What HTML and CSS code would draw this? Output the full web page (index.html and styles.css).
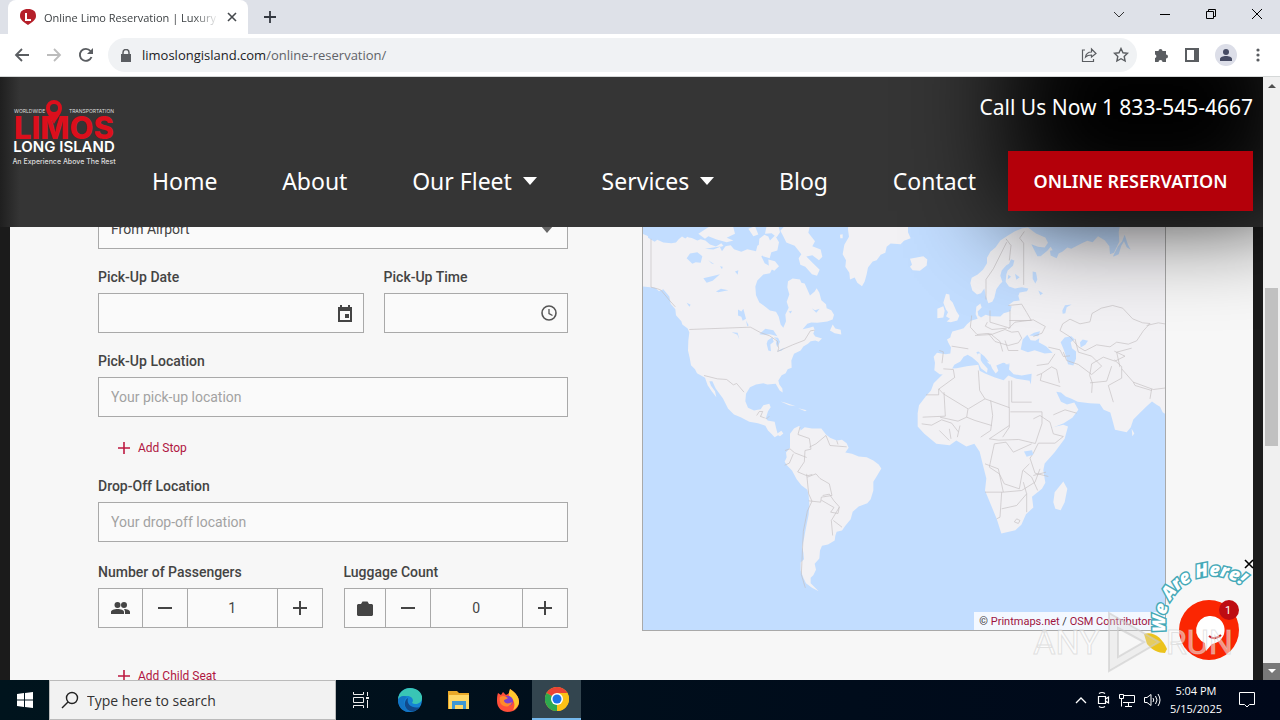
FILE: index.html
```html
<!DOCTYPE html>
<html lang="en">
<head>
<meta charset="UTF-8" />
<meta name="viewport" content="width=device-width, initial-scale=1" />
<title>Online Limo Reservation | Luxury</title>
<link rel="stylesheet" href="styles.css">
</head>
<body>
<!-- Tab strip -->
<div class="tabstrip">
<div class="tab">
<svg width="16" height="16" viewBox="0 0 16 16"><path d="M8 0C13 0 16 2 16 7c0 4-4 6-8 9C4 13 0 11 0 7 0 2 3 0 8 0z" fill="#b5202a"/><path d="M6 4v7h5" fill="none" stroke="#fff" stroke-width="2"/></svg>
<span class="tab-title">Online Limo Reservation | Luxury</span>
<button class="icon-btn" aria-label="Close tab"><svg width="10" height="10" viewBox="0 0 10 10"><path d="M1 1l8 8M9 1L1 9" stroke="#45494d" stroke-width="1.6"/></svg></button>
</div>
<button class="icon-btn new-tab" aria-label="New tab"><svg width="12" height="12" viewBox="0 0 12 12"><path d="M6 0v12M0 6h12" stroke="#333840" stroke-width="1.8"/></svg></button>
<div class="window-buttons">
<button class="icon-btn" aria-label="Search tabs"><svg width="12" height="12" viewBox="0 0 12 12"><path d="M1 4l5 5 5-5" fill="none" stroke="#333"/></svg></button>
<button class="icon-btn" aria-label="Minimize"><svg width="12" height="12" viewBox="0 0 12 12"><path d="M1 6.5h10" stroke="#000"/></svg></button>
<button class="icon-btn" aria-label="Restore"><svg width="12" height="12" viewBox="0 0 12 12"><path d="M1.5 3.5h7v7h-7zM3.5 3V1.500h7v7H9" fill="none" stroke="#000"/></svg></button>
<button class="icon-btn" aria-label="Close"><svg width="12" height="12" viewBox="0 0 12 12"><path d="M1 1l10 10M11 1L1 11" stroke="#000"/></svg></button>
</div>
</div>

<!-- Toolbar -->
<div class="toolbar">
<button class="icon-btn" aria-label="Back"><svg width="16" height="16" viewBox="0 0 16 16"><path d="M15 8H2M8 2L2 8l6 6" fill="none" stroke="#5a5d61" stroke-width="1.8"/></svg></button>
<button class="icon-btn" aria-label="Forward"><svg width="16" height="16" viewBox="0 0 16 16"><path d="M1 8h13M8 2l6 6-6 6" fill="none" stroke="#bcbcbc" stroke-width="1.8"/></svg></button>
<button class="icon-btn" aria-label="Reload"><svg width="16" height="16" viewBox="0 0 16 16"><path d="M13.500 10A6 6 0 1 1 12.500 4" fill="none" stroke="#5a5d61" stroke-width="1.9"/><path d="M15 1v6H9z" fill="#5a5d61"/></svg></button>
<div class="omnibox">
<svg width="10" height="13" viewBox="0 0 10 13"><path d="M0 5h10v8H0z" fill="#5a5d61"/><path d="M2 5V3.500a3 3 0 0 1 6 0V5" fill="none" stroke="#5a5d61" stroke-width="1.5"/></svg>
<span class="url">limoslongisland.com<span>/online-reservation/</span></span>
<button class="icon-btn" aria-label="Share"><svg width="16" height="16" viewBox="0 0 16 16"><path d="M4 3H1.500v11.500h11V12M4.500 10c.5-3 2-5 6-5V2L15 6.500 10.500 10V8C8 8 6 8.500 4.500 10z" fill="none" stroke="#5a5d61" stroke-width="1.2"/></svg></button>
<button class="icon-btn" aria-label="Bookmark"><svg width="16" height="16" viewBox="0 0 16 16"><path d="M8 1.500l2 4.300 4.500.5-3.300 3.100.9 4.600L8 11.700 3.900 14l.9-4.600L1.500 6.300 6 5.800z" fill="none" stroke="#5a5d61" stroke-width="1.4"/></svg></button>
</div>
<button class="icon-btn" aria-label="Extensions"><svg width="16" height="16" viewBox="0 0 16 16"><path d="M2 4h3.500a2 2 0 1 1 4 0H13v3.500a2 2 0 1 1 0 4V15H9.500a2 2 0 0 0-4 0H2v-4a1.800 1.800 0 0 0 0-3.500z" fill="#5a5d61"/></svg></button>
<button class="icon-btn" aria-label="Side panel"><svg width="14" height="14" viewBox="0 0 14 14"><path d="M1 1h12v12H1z" fill="none" stroke="#5a5d61" stroke-width="2"/><path d="M9 1h4v12H9z" fill="#5a5d61"/></svg></button>
<button class="icon-btn profile" aria-label="Profile"><svg width="12" height="12" viewBox="0 0 12 12"><circle cx="6" cy="3" r="3" fill="#464b63"/><path d="M0 12v-2c0-4 12-4 12 0v2z" fill="#464b63"/></svg></button>
<button class="icon-btn" aria-label="Menu"><svg width="10" height="14" viewBox="0 0 10 14" fill="#5a5d61"><circle cx="5" cy="2" r="1.600"/><circle cx="5" cy="7" r="1.600"/><circle cx="5" cy="12" r="1.600"/></svg></button>
</div>

<div class="viewport">
<div class="page">
<header class="site-header">
<a class="logo" href="#" aria-label="Limos Long Island">
<svg width="104" height="68" viewBox="0 0 104 68">
<text x="2" y="14" class="logo-small">WORLDWIDE</text>
<text x="102" y="14" class="logo-small" text-anchor="end">TRANSPORTATION</text>
<text x="52" y="40" class="logo-big" text-anchor="middle">LIMOS</text>
<path d="M42 1a8 8 0 0 1 8 8c0 5-4 9-8 16-4-7-8-11-8-16a8 8 0 0 1 8-8z" fill="#dc0f1c"/><circle cx="42" cy="9" r="4" fill="#353535"/>
<text x="52" y="53" class="logo-mid" text-anchor="middle">LONG ISLAND</text>
<text x="52" y="65" class="logo-tag" text-anchor="middle">An Experience Above The Rest</text>
</svg>
</a>
<nav class="main-nav">
<a href="#">Home</a>
<a href="#">About</a>
<a href="#">Our Fleet <svg width="14" height="8" viewBox="0 0 14 8"><path d="M0 0h14L7 8z" fill="#fff"/></svg></a>
<a href="#">Services <svg width="14" height="8" viewBox="0 0 14 8"><path d="M0 0h14L7 8z" fill="#fff"/></svg></a>
<a href="#">Blog</a>
<a href="#">Contact</a>
</nav>
<div class="header-actions">
<a class="phone" href="#">Call Us Now 1 833-545-4667</a>
<a class="reserve" href="#">ONLINE RESERVATION</a>
</div>
</header>

<main class="panel">
<form class="booking">
<div class="with-icon">
<select class="field" aria-label="Service Type"><option>From Airport</option></select>
<svg class="caret" width="12" height="12" viewBox="0 0 12 12"><path d="M0 5h12l-6 7z" fill="#666"/></svg>
</div>
<div class="row row-when">
<div class="group">
<label for="date">Pick-Up Date</label>
<div class="with-icon">
<input class="field" type="text" id="date" />
<svg width="16" height="18" viewBox="0 0 16 18"><path d="M2 3h12v13H2z" fill="none" stroke="#444" stroke-width="2"/><path d="M2 3h12v3H2zM3 0h2v3H3zM11 0h2v3h-2zM8 9h4v4H8z" fill="#444"/></svg>
</div>
</div>
<div class="group">
<label for="time">Pick-Up Time</label>
<div class="with-icon">
<input class="field" type="text" id="time" />
<svg width="16" height="16" viewBox="0 0 16 16"><circle cx="8" cy="8" r="7" fill="none" stroke="#555" stroke-width="1.6"/><path d="M8 4v4.500l3.500 2" fill="none" stroke="#555" stroke-width="1.3"/></svg>
</div>
</div>
</div>
<div class="group">
<label for="pickup">Pick-Up Location</label>
<input class="field" type="text" id="pickup" placeholder="Your pick-up location" />
</div>
<button class="add" type="button"><svg width="12" height="12" viewBox="0 0 12 12"><path d="M6 0v12M0 6h12" stroke="#bd1a41" stroke-width="1.6"/></svg>Add Stop</button>
<div class="group">
<label for="dropoff">Drop-Off Location</label>
<input class="field" type="text" id="dropoff" placeholder="Your drop-off location" />
</div>
<div class="row row-counts">
<div class="group">
<label for="passengers">Number of Passengers</label>
<div class="counter">
<span class="cell"><svg width="20" height="14" viewBox="0 0 20 14" fill="#444"><circle cx="6.500" cy="4" r="3"/><circle cx="13" cy="4" r="3"/><path d="M0 13v-2c0-4 13-4 13 0v2zM14 13v-2c0-1-.3-2-1-3 3 0 6 1 6 3v2z"/></svg></span>
<button class="cell" type="button" aria-label="Fewer passengers"><svg width="14" height="14" viewBox="0 0 14 14"><path d="M0 7h14" stroke="#444" stroke-width="2"/></svg></button>
<input type="text" id="passengers" value="1" />
<button class="cell" type="button" aria-label="More passengers"><svg width="14" height="14" viewBox="0 0 14 14"><path d="M0 7h14M7 0v14" stroke="#444" stroke-width="2"/></svg></button>
</div>
</div>
<div class="group">
<label for="luggage">Luggage Count</label>
<div class="counter">
<span class="cell cell-bag"><svg width="16" height="15" viewBox="0 0 16 15"><path d="M1 3h3l1.500-2.500h5L12 3h3l1 1v10l-1 1H1l-1-1V4z" fill="#444"/></svg></span>
<button class="cell" type="button" aria-label="Less luggage"><svg width="14" height="14" viewBox="0 0 14 14"><path d="M0 7h14" stroke="#444" stroke-width="2"/></svg></button>
<input type="text" id="luggage" value="0" />
<button class="cell" type="button" aria-label="More luggage"><svg width="14" height="14" viewBox="0 0 14 14"><path d="M0 7h14M7 0v14" stroke="#444" stroke-width="2"/></svg></button>
</div>
</div>
</div>
<button class="add add-seat" type="button"><svg width="12" height="12" viewBox="0 0 12 12"><path d="M6 0v12M0 6h12" stroke="#bd1a41" stroke-width="1.6"/></svg>Add Child Seat</button>
</form>

<div class="map">
<svg class="map-art" viewBox="643 209 522 421" preserveAspectRatio="xMidYMid slice">
<!-- North America and Greenland -->
<g transform="translate(640 225) scale(.33333)">
<path class="land" d="M8 -60V183l37 4 12 10 13-6 18 22 4 22 14 16 2 18 16 18 3 10 16 12 5 12-3 24-1 30 5 22 4 22 12 12 6 12 24 14 8 22 12 18 14 18-4-18-12-16-5-14h9l10 22 22 30 15 30 18 18 20 8 26 14 26 4 22 8 8 14 10 10 10 10 10-6-6-22-4-18-22-4-4-8 6-20 8-12-4-10-18 4-8 12-20 4-18-8-8-20 2-22 12-20 18-8 22-4 12 4 25-2 12 20 9 6-1-12-9-12-3-12 10-16 12-6 6-12 12-4-1-22 8-20 20-10 8-12 14-8 8-8 14-2 10 4 10-10-20-6-6-8 4-12-4-10-12 4-20 4 14-16 12-4 18 1 30-4 16-6 4-14-8-14-14-6-2-12-14-12-6-22-8-14-6 10-14 12-8-18-8-18-10-2-4-10-22-3-14 8-2 18 6 22-8 22 6 18-10 20 2 20-8 20-8-10-6-24-8-14-18-4-20-16-12-8-10-22-2-26 6-18 18-18 20-4 8-16-24-14-10-20 12-14-4-10-8-16-12 8-4 16-26-6-18 8-22-8-10-12-20 4-8-10-16 10-18-6-14-12-14-4-10 4-18-8-8-6-10 8-10-6-10 8-8 10-14 2-24-2-18-8-8 6-20-12V-60z"/>
<path class="water" d="M0 -60V22l20 8 14 8 46 6 20-6 8-12 12 4 14-4 12 10 20 2 10-14V-60z"/>
<path class="land" d="M175 25l30-20 50-8 25 8 5 20-25 12 20 8-20 5-30-8-25-10-10 8zM325 10l20-8 10 25-15 5zM358 40l15-12 12 5 5 12 15-15 12 20-5 25-18 5-5 18-20-6-14-16zM385 102l20 5 12 15-14 14-16-8zM380 0h35l5 20-10 15-15-12-20 2zM435 0h75l-5 22 20 25-8 15 25 10 5 22-10 10-20-15-18 4 20 20 20 20-8 18-15-5-20-22-15-6-5-20 8-12-8-10-12-15-25-10-10-20-8-15zM600 28l8-2v12h-7zM628-60l-4 72 3 22-14 24-5 28 10 18-2 20 12 18 2 20 14-6 8 16 14 10 8-14 6-22 4-20 14-18 12-4 12-16 14-6 4-18 12-10 30 2 10-10 20-8-8-18V-60zM570 315l8-18 8 12 16 4 2 14-20-4zM422 528l15 4 30 10-20-3zM475 548l25 6-5 3z"/>
<path class="water" d="M140 98l10-14 22-4 15 12-5 20-15-2-10 5zM190 158l35-8 15-4-22 20-18 6zM228 198l15-8 22 4-30 6zM285 138l10-4-2 14zM240 122l8 2-2 7zM140 232l12 6-4 6zM294 252l10 6 6-8 8 30-10 6-4-12-10-4zM318 285l8 14-4 4zM358 326l18-16 24 4 12 18-22-6-16 2zM383 345l14-10 4 14-10 8 2 20-8-2-5-20zM402 335l12 2 6 12-8 16-4-10 2-12zM410 378l24-12-10 10zM515 248l10 6 14-4-10 12zM275 320l18 2 5 20-6-14zM205 104l18 12-8-2zM446 258l10-2-4 8zM240 65l20-8-14 20zM195 70l50-8-25 10z"/>
<path class="border" d="M33 40v145l20 5 10 4 25 30 18 20M148 312l183-7 6 3 24 13 28 10 23 16 4 22-3 9 45-20 36-14 17-28 13-2M192 450l40 10 28 2 20 16 10-4 22 26M350 570l8-12h10l-6 14M360 572l20 8 8-8"/>
</g>
<!-- Europe, Asia and Africa -->
<g transform="translate(900 225) scale(.33333)">
<path class="land" d="M345 17l-20 12-24 16-14 20-16 14-10 18 0 16-12 20-16 14-18 10-4 16 6 22 14 12 12-4 10-14 4 22 8 22 12-4 6-12 6-26 10-14 8-8-6-18 4-16 14-16 8-4 6-14 10 4-4 16-16 14-4 12-2 22 10 14 18 6 20-4 20 4-4 8-22 4-4 10 4 14-18 2-16 12 10 4-4 14-20 6-10 10-28-1-16-4-14 8-8-6-2-12 12-12-4-12-12 10-2 22 6 14-20 6-12 10-10 12-12 4-22 6-4 10-2 8-10 6 4 10 8 14-2 18-14 2-26-4-10 12 4 18-2 22 16 12 16 2 18-12 10-18 18-10 10-14 12-6 14 8 18 16 8 16 18 14 2-12-16-18-12-20-6-12 6-2 18 14 16 20 8 18 10 14 8-8-6-16 20-8 20 2-2 18 14 14 24 4 30-5-2 25-10 25-4 20 16 25 14 26 16 30 10 15 26-6 30-12 26-16 18-24-12-22-22 6-18-8-14-30 14 2 14 12 16 6 20 10 36 4 30 2 12 18 20 8 6 22 8 30L680 620l12-14 8-24 20-20 20-20 16-14 14 10 10 6 8 16 12 8V-60H668l-8 60-4 20 2 28-16 34-12 4-2-24-14-18-20-12-16 18-16-4-18 8-30 16-12-4-14 12-12 6-6 14-18-8-2-14 8-2-6-10-10 12-20 16-10 0-10-20-8-16 20 8 20 2 10-14-8-16-28-12-24-18-16 2z"/>
<path class="land" d="M145 430l25-2 30-6 35-4 4 18 16 8 30 12 26 8 14-14 24 10 40 6 4 18 14 36 14 28 16 28 18 30 35-8 14 5-10 37-30 40-30 34-4 20 6 38-10 18-30 24 4 32-22 20-14 32-18 16-42 10L290 880l-35-85 4-36-10-40-10-40-16-24-24 8-30-18-20 14-40-4-36-30-20-22 0-40 4-24 20-26 16-18 8-22zM490 768l-26 32-4 30 6 20 16 4 12-24 8-40z"/>
<path class="land" d="M30 100l20-4 20-4 12 10-2 18-20 16-22-2-8-10 6-6zM0 25h18L0 50zM138 205l10 2 2 16 8 8 12 28 8 12-6 14-20 5-12-2 10-8-12-8 6-12-6-8-8-20zM112 250l18-8 4 14-4 20-18 2zM260 408l14 2-4 8zM232 385l10-2 0 20-8 2zM380 423l16-4-6 6zM315 410l18 6h-16zM695 610l8 14-6 8z"/>
<path class="water" d="M362 372l6-30 14-14 10 16 14 2 12-8-2 12 22 12 20 20-24 2-30-10-20 6zM388 330l14-8 18-5-5 15zM482 350l12-14 20-4 10 10-12 8 4 18 12 10 0 22-8 20-16-4-6-24-6-18zM487 255l8-16 20-2-15 8-4 18-8 2zM540 350l8-8 16 4-8 12-14 8zM398 138l10 2 4 22-6 12-8-14zM415 195l14 8-8 6zM640 90l14-28 12-14 8-20 10 30 8 15-12-8-8-18-8 14-8 25-16 8zM325 148l8 6-10 8zM345 145l14 10-10 8z"/>
<path class="border" d="M318 40l15 20-5 45M373 18l-14 20 12 15v125M320 50l-40 80-22 32v60M215 270l-4 35 20 22 30-3 15 2M270 255v35l60 18v-55M325 240l40-4 15 25 14 24-66 0M325 310l20-20 55-7 36 20-10 20-26 10M262 290l-6 12 20 10 44-4M225 330l50-3 40-15 20 8 20-2 10 20-10 14-30 8-40-12-20-24M315 345l10 30 30 0M275 328l25 20 8 30M155 362l50 8M118 375l12 4-4 34M445 365l35 8 10 20 20-2M465 385l-20 30-35 5M480 315l8-20 22-14 30 14 30-6 6-25 28-16 34-8 30 8 30 32 30 12 22 2-20 22-20 30-25 10-35-6-20 14-40-6-35 18-20-12-25-30zM525 340l10 40 40 12 30 30-30 25-40-30-35-12-10-25M575 415l35-20 35 12 30-15-32-15M575 415l-6 35 8 22-2 30M570 472l50-5 15-45M640 530l-15-50 40-22 0-35-22-20M665 430l35 40 60 22 40-5M700 470l5 10 50 15M755 490l-5 30M660 425l-10-45 45-12M740 300l35-8 25 4M410 450l15-6 30-20 15 8 8 40M425 445l-4 20 60 18M460 568l35-15 35 10"/>
<path class="border" d="M130 430l30 2 4 24-48 35v17l-38 0M116 490l14 15 74 45-4 25-26 12-54-12M132 500l4 72-68 3M235 435l4 60 16 25-50 30M255 520l72 26v-80M335 465v65h60M328 545v60l-20 30M272 525l6 45-6 45-30 20M275 600l-50-15-25-10M328 600l-60 40 28 4 60-2 50 12 20-60 0-35h-95M65 595l30 4 30-16 30 10 20 26M118 615l30 30M148 610l5 30M180 600l-8 35M400 580l20-10 30 20 10 35 30 8-25 20-50 0-15 30-10 15 15 45 40 10M395 655l-55 25-22-30-35 5-15 70 30 20 15 30 45 15 10-55 20-20M255 715l40 15 15 70h-55M305 800l-5 75-10 5M310 800l55-5 40-25 15-40M305 850l45-10 30-35-10-35M380 805l0 55M350 880l10 5-5 9-12-5zM370 735l25 20 18 40M400 750l38-10"/>
<path class="water" d="M372 678l24-4 4 14-20 6z"/>
</g>
<!-- South America -->
<g transform="translate(740 410) scale(.33333)">
<path class="land" d="M150 70l12-16 16-8 4 14 12-10 22 4 28 0 14 18 12 10 20 8 16-2 14 10 6 14-10 14 20 4 20 8 24 2 20 10 16 12 8 12-12 20-12 20 0 26-8 26-10 12-26 10-18 16-6 22-16 20-10 14-16 4-4 12-2 14-20 12-18 4-6 14-2 24-14 16 4 18-8 16-8 8 0 16 24 24-20-10-18-14-8-16-8-22 0-24 10-10-2-20-4-16 6-26 6-32 8-40 2-30-2-28-4-16-18-14-14-18-14-26-14-14-8-12 6-14-2-14 12-14zM0 3l12 8 26 4 22 12 16-4 14 16 4 12 8 14 10 4 12-8 6 8-10 8-12-6-22-12-10-20-16-6-10-8-50-12z"/>
<path class="border" d="M180 50l-6 22 34 12 5 32-18 4-2 34-20 30 28 12 16-4M135 120l15-5 14 12 36 14M160 130l-12 28-14 6M200 190l6 60 10 22-14 30-12 60-6 130 12 40M202 200l26-10 12 14 28 16 8 35-32 5-2 15-36-4M248 255l20-4 14 20 16 18-4 20-22-4 10-14-38-22M280 330l26 20M298 290l-24 40 4 45M208 110l20-10 30-25 12 30 50 4M290 90l4 12"/>
</g>
</svg>
<p class="credit">© <a href="#">Printmaps.net</a> / <a href="#">OSM Contributors</a></p>
</div>
</main>

<!-- Chat launcher -->
<div class="chat">
<svg width="130" height="110" viewBox="0 0 130 110">
<defs><path id="arc" d="M30 76A47 47 0 0 1 123 58"/></defs>
<path d="M8 78c10-3 18 4 23 15l-2 4c-7 0-13-3-18-9z" fill="#ecc31c"/>
<circle cx="73" cy="74" r="30" fill="#fb2602"/>
<path d="M73 60a14 14 0 0 1 3 28l-6 7-1-8a14 14 0 0 1 4-27z" fill="#fff"/>
<path d="M73 80q6 5 12-1" fill="none" stroke="#c71c1c" stroke-width="2"/>
<text class="chat-text"><textPath href="#arc">We Are Here!</textPath></text>
<circle cx="93" cy="54" r="10" fill="#be0c12"/>
<text x="92" y="58" class="chat-count" text-anchor="middle">1</text>
<path d="M109 4l8 8M117 4l-8 8" stroke="#000" stroke-width="1.6"/>
</svg>
</div>
<div class="watermark">
<span>ANY</span>
<svg width="58" height="64" viewBox="0 0 58 64"><path d="M5 3l50 29L5 61zM14 18l26 14-26 15z" fill="#ddd" fill-opacity=".35" fill-rule="evenodd" stroke="#ccc" stroke-opacity=".6" stroke-width="2"/></svg>
<span>RUN</span>
</div>
</div>

<div class="scrollbar">
<svg width="17" height="17" viewBox="0 0 17 17"><path d="M5 11l4-4 4 4z" fill="#505050"/></svg>
<div class="thumb"></div>
<svg class="down" width="17" height="17" viewBox="0 0 17 17"><path d="M5 6l4 4 4-4z" fill="#fff"/></svg>
</div>
</div>

<!-- Taskbar -->
<footer class="taskbar">
<button class="task" aria-label="Start"><svg width="16" height="16" viewBox="0 0 16 16" fill="#fff"><path d="M0 2l7-1v6.500H0zM8 1l8-1v7.500H8zM0 8.500h7V15l-7-1zM8 8.500h8V16l-8-1z"/></svg></button>
<label class="search">
<svg width="18" height="18" viewBox="0 0 18 18"><circle cx="11" cy="7" r="5.500" fill="none" stroke="#222" stroke-width="1.4"/><path d="M7 11l-6 6" stroke="#222" stroke-width="1.4"/></svg>
<input type="text" aria-label="Search" placeholder="Type here to search" />
</label>
<button class="task" aria-label="Task view"><svg width="16" height="16" viewBox="0 0 16 16" fill="none" stroke="#eee"><path d="M.5 0v2.500h10V0M.5 5.500h10v5H.500zM.5 16v-2.500h10V16M14.500 0v4M14.500 8v8"/><path d="M13 5h3v2h-3z" fill="#eee" stroke="none"/></svg></button>
<button class="task" aria-label="Edge"><svg width="24" height="24" viewBox="0 0 24 24"><circle cx="12" cy="12" r="12" fill="#1583d4"/><path d="M0 11C1 4 6 0 12 0c8 0 13 6 12 11-1 5-7 6-10 4 2-2 1-7-5-7-4 0-7 1-9 3z" fill="#39c5b5"/><path d="M9 9c-6 5-2 13 4 15C5 25 0 19 0 12c1-4 6-5 9-3z" fill="#1274c4"/><path d="M10 10c-2 7 5 11 12 9-3 4-7 5-10 4-6-2-7-10-2-13z" fill="#114a8c"/></svg></button>
<button class="task" aria-label="File Explorer"><svg width="22" height="20" viewBox="0 0 22 20"><path d="M0 1h9l2 2h10v16H0z" fill="#e9a929"/><path d="M1 5h20v14H1z" fill="#ffd867"/><path d="M4 11h14v8h-3v-4H7v4H4z" fill="#3f98d3"/></svg></button>
<button class="task" aria-label="Firefox"><svg width="24" height="24" viewBox="0 0 24 24"><path d="M2 5l3 2 2-3 3 3c2-1 4-2 4-6 6 4 9 8 9 13 0 6-5 10-11 10S1 20 1 13c0-3 0-5 1-8z" fill="#ff4f3a"/><path d="M14 1c6 4 9 8 9 13 0 3-3 7-6 8 3-5 1-11-3-13-2-2-1-5 0-8z" fill="#ffc72e"/><circle cx="12" cy="13" r="5" fill="#7b3fd1"/><path d="M4 9c3-2 5-1 8 1-2 2-4 1-4 3 1 3 5 3 8 1-1 5-8 6-11 2-1-2-2-5-1-7z" fill="#ff8a2b"/></svg></button>
<button class="task task-active" aria-label="Chrome"><svg width="24" height="24" viewBox="0 0 24 24"><circle cx="12" cy="12" r="12" fill="#fbc116"/><path d="M12 12L1.600 6a12 12 0 0 1 20.800 0z" fill="#ea4335"/><path d="M12 12v12A12 12 0 0 1 1.600 6z" fill="#2da94f"/><path d="M12 6h10.400A12 12 0 0 1 12 24l5-9z" fill="#fbc116"/><circle cx="12" cy="12" r="6" fill="#fff"/><circle cx="12" cy="12" r="4.500" fill="#1a73e8"/></svg></button>
<div class="tray">
<svg width="12" height="8" viewBox="0 0 12 8"><path d="M1 7l5-5 5 5" fill="none" stroke="#fff" stroke-width="1.3"/></svg>
<svg width="14" height="18" viewBox="0 0 14 18" fill="none" stroke="#fff" stroke-width="1.2"><path d="M2.500 5.500h7v7h-7zM9.500 8l3-2v6l-3-2M3 2.500q3-2 6 0M3 15.500q3 2 6 0"/></svg>
<svg width="16" height="16" viewBox="0 0 16 16" fill="none" stroke="#fff"><path d="M5 3.500h10.500v7H4M9.500 11v3M6 14.500h7M.5 2.500h4v4h-4zM2.500 6.500v8"/></svg>
<svg width="17" height="16" viewBox="0 0 17 16" fill="none" stroke="#fff"><path d="M.5 5.500H3l4-3v11l-4-3H.500zM9 6q1.500 2 0 4M11.500 4q3 4 0 8M14 2q4 6 0 12"/></svg>
<div class="clock"><span>5:04 PM</span><span>5/15/2025</span></div>
<svg width="17" height="16" viewBox="0 0 17 16"><path d="M.5.500h15v12h-5L8 15l-2.500-2.500h-5z" fill="none" stroke="#fff"/></svg>
</div>
</footer>
</body>
</html>
```
FILE: styles.css
```css
:root {
--ui-font: "Open Sans", "Noto Sans", sans-serif;
--site-font: "Noto Sans", sans-serif;
--form-font: Roboto, sans-serif;
--panel-bg: #f7f7f7;
--field-bg: #fafafa;
--line: #a9a9a9;
--red: #b4000a;
--link: #b01540;
}
* {
box-sizing: border-box;
}
body {
margin: 0;
height: 100vh;
display: flex;
flex-direction: column;
overflow: hidden;
font-family: var(--ui-font);
}
button {
font: inherit;
border: none;
background: none;
padding: 0;
cursor: pointer;
}
a {
color: inherit;
text-decoration: none;
}
svg {
display: block;
flex-shrink: 0;
}
.icon-btn {
display: flex;
align-items: center;
justify-content: center;
}

/* Browser frame */
.tabstrip {
display: flex;
align-items: center;
height: 34px;
padding-left: 8px;
background: #dee1e8;
}
.tab {
display: flex;
align-items: center;
gap: 8px;
width: 240px;
height: 34px;
padding: 0 11px 0 12px;
background: #fff;
border-radius: 8px 8px 0 0;
}
.tab-title {
flex: 1;
overflow: hidden;
white-space: nowrap;
font-size: 11px;
color: #3c4043;
-webkit-mask-image: linear-gradient(90deg, #000 85%, transparent);
mask-image: linear-gradient(90deg, #000 85%, transparent);
}
.new-tab {
margin-left: 16px;
}
.window-buttons {
display: flex;
gap: 34px;
margin-left: auto;
padding: 0 17px 6px 0;
}
.toolbar {
display: flex;
align-items: center;
gap: 16px;
height: 43px;
padding: 0 17px 0 14px;
background: #fff;
border-bottom: 1px solid #d5d8d8;
}
.omnibox {
flex: 1;
display: flex;
align-items: center;
gap: 16px;
height: 34px;
margin-left: -2px;
padding: 0 8px 0 13px;
border-radius: 17px;
background: #f0f2f4;
}
.url {
flex: 1;
margin-left: -5px;
font-size: 13px;
color: #202124;
}
.url span {
color: #5f6368;
}
.profile {
width: 22px;
height: 22px;
border-radius: 50%;
background: #dcdee8;
}

/* Page area */
.viewport {
flex: 1;
min-height: 0;
display: flex;
}
.page {
flex: 1;
position: relative;
overflow: hidden;
padding: 0 10px;
background: #1b1b1b;
}
.scrollbar {
display: flex;
flex-direction: column;
width: 17px;
background: #f0f0f0;
}
.thumb {
height: 158px;
margin: 194px 2px auto;
background: #c1c1c1;
}
.down {
background: #787878;
}

.site-header {
position: absolute;
top: 0;
left: 0;
right: 0;
z-index: 1;
display: flex;
align-items: flex-start;
height: 150px;
padding: 0 10px 0 12px;
background: linear-gradient(90deg, #1f1f1f, #353535 20px);
color: #fff;
font-family: var(--site-font);
}
.logo {
margin-top: 22px;
}
.logo-small, .logo-tag, .logo-big, .logo-mid {
font-family: Inter, sans-serif;
fill: #ddd;
}
.logo-small {
font-size: 5px;
}
.logo-tag {
font-size: 7px;
font-weight: 500;
}
.logo-big {
font-size: 31px;
font-weight: 800;
fill: #dc0f1c;
}
.logo-mid {
font-size: 15px;
font-weight: 600;
fill: #fff;
}
.main-nav {
flex: 1;
display: flex;
justify-content: space-between;
padding: 86px 32px 0 36px;
font-size: 23px;
line-height: 36px;
white-space: nowrap;
}
.main-nav a {
display: flex;
align-items: center;
gap: 11px;
}
.header-actions {
position: relative;
display: flex;
flex-direction: column;
align-items: flex-end;
width: 245px;
}
/* soft shadow that falls behind the call-to-action and onto the page */
.header-actions::before {
content: "";
position: absolute;
inset: -80px -40px 0 0;
z-index: -1;
background: #000;
filter: blur(50px);
}
.phone {
margin: 14px 0 28px;
font-size: 21px;
line-height: 32px;
white-space: nowrap;
}
.reserve {
width: 100%;
background: var(--red);
font-size: 18px;
font-weight: 600;
line-height: 60px;
text-align: center;
white-space: nowrap;
}

/* Booking form */
.panel {
display: grid;
grid-template-columns: minmax(0, 470fr) minmax(0, 524fr);
gap: 74px;
align-items: start;
min-height: 100%;
padding: 132px 87px 0 88px;
background: var(--panel-bg);
font-family: var(--form-font);
}
.booking {
font-size: 14px;
color: #444;
}
.field {
display: block;
width: 100%;
height: 40px;
padding: 0 12px;
border: 1px solid var(--line);
border-radius: 0;
background: var(--field-bg);
font: inherit;
color: inherit;
}
select.field {
appearance: none;
}
.field::placeholder {
color: #a2a2a2;
}
.row {
display: grid;
}
.row-when {
grid-template-columns: minmax(0, 265fr) minmax(0, 184fr);
gap: 20px;
}
.row-counts {
grid-template-columns: minmax(0, 1fr) minmax(0, 1fr);
gap: 21px;
padding-top: 2px;
}
.group {
margin-top: 20px;
}
.group label {
display: block;
margin-bottom: 8px;
font-weight: 500;
line-height: 16px;
}
.with-icon {
position: relative;
}
.with-icon svg {
position: absolute;
right: 11px;
top: 12px;
}
.with-icon .caret {
right: 15px;
}
.add {
display: flex;
align-items: center;
gap: 8px;
height: 21px;
margin: 20px 0 0 20px;
font-size: 12px;
color: var(--link);
}
.add-seat {
margin-top: 37px;
}
.counter {
display: flex;
height: 40px;
border: 1px solid var(--line);
background: var(--field-bg);
}
.cell {
display: flex;
align-items: center;
justify-content: center;
width: 44px;
}
.cell-bag {
width: 41px;
}
.counter input {
flex: 1;
min-width: 0;
border: solid var(--line);
border-width: 0 1px;
background: none;
font: inherit;
color: inherit;
text-align: center;
}
span.cell {
border-right: 1px solid var(--line);
}
.map {
position: relative;
height: 422px;
border: 1px solid var(--line);
background: #c2ddff;
overflow: hidden;
}
.map-art {
width: 100%;
height: 100%;
}
.land {
fill: #f2f1f4;
}
.water {
fill: #c2ddff;
}
.border {
fill: none;
stroke: #c4bfc1;
stroke-width: 2;
}
.credit {
position: absolute;
right: 0;
bottom: 0;
margin: 0;
padding: 1px 8px 0 5px;
background: rgba(255, 255, 255, 0.8);
font-size: 11px;
line-height: 17px;
color: #333;
}
.credit a {
color: #a0153e;
}

/* Floating items */
.chat {
position: absolute;
right: -3px;
bottom: 14px;
z-index: 2;
}
.chat-text {
font-family: "Open Sans", sans-serif;
font-size: 18px;
font-weight: 800;
font-style: italic;
fill: #fff;
stroke: #45a9b8;
stroke-width: 3px;
paint-order: stroke;
}
.chat-count {
font-family: Roboto, sans-serif;
font-size: 11px;
fill: #fff;
}
.watermark {
position: absolute;
right: 30px;
bottom: 6px;
z-index: 3;
display: flex;
align-items: center;
gap: 4px;
font: 400 34px/60px Roboto, sans-serif;
color: rgba(255, 255, 255, 0.5);
-webkit-text-stroke: 1px rgba(200, 200, 200, 0.5);
pointer-events: none;
}

/* Taskbar */
.taskbar {
display: flex;
height: 40px;
background: linear-gradient(90deg, #00141d, #00081a);
}
.task {
display: flex;
align-items: center;
justify-content: center;
width: 49px;
}
.task-active {
background: #33454f;
border-bottom: 2px solid #76b9ed;
}
.search {
display: flex;
align-items: center;
gap: 8px;
width: 287px;
padding: 0 11px;
border: 1px solid #bbb;
background: #f2f2f2;
}
.search input {
flex: 1;
min-width: 0;
padding: 0;
border: none;
background: none;
font: 14px var(--ui-font);
}
.search input::placeholder {
color: #333;
}
.tray {
display: flex;
align-items: center;
gap: 9px;
margin-left: auto;
padding-right: 24px;
}
.clock {
display: flex;
flex-direction: column;
align-items: center;
margin-right: 8px;
font-size: 11px;
line-height: 18px;
color: #fff;
}
```
